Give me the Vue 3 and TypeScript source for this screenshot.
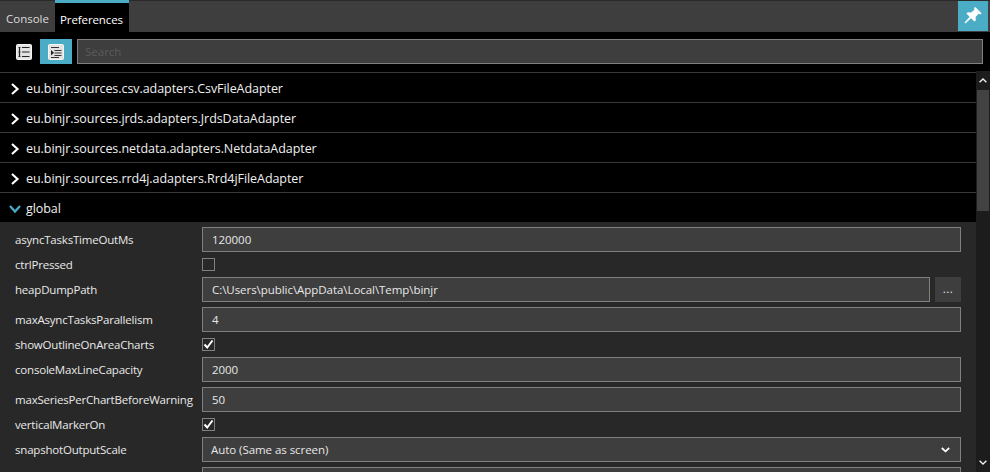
<script setup lang="ts">
interface Row { label: string; kind: 'text' | 'check' | 'path' | 'combo'; value?: string; checked?: boolean }
const adapters: string[] = [
  'eu.binjr.sources.csv.adapters.CsvFileAdapter',
  'eu.binjr.sources.jrds.adapters.JrdsDataAdapter',
  'eu.binjr.sources.netdata.adapters.NetdataAdapter',
  'eu.binjr.sources.rrd4j.adapters.Rrd4jFileAdapter',
]
const rows: Row[] = [
  { label: 'asyncTasksTimeOutMs', kind: 'text', value: '120000' },
  { label: 'ctrlPressed', kind: 'check', checked: false },
  { label: 'heapDumpPath', kind: 'path', value: 'C:\\Users\\public\\AppData\\Local\\Temp\\binjr' },
  { label: 'maxAsyncTasksParallelism', kind: 'text', value: '4' },
  { label: 'showOutlineOnAreaCharts', kind: 'check', checked: true },
  { label: 'consoleMaxLineCapacity', kind: 'text', value: '2000' },
  { label: 'maxSeriesPerChartBeforeWarning', kind: 'text', value: '50' },
  { label: 'verticalMarkerOn', kind: 'check', checked: true },
  { label: 'snapshotOutputScale', kind: 'combo', value: 'Auto (Same as screen)' },
  { label: '', kind: 'text', value: '' },
]
</script>

<template>
  <div class="app">
    <header class="tabbar">
      <div class="tab">Console</div>
      <div class="tab active">Preferences</div>
      <div class="tabfill"></div>
      <button class="pin" aria-label="Pin">
        <svg width="20" height="20" viewBox="0 0 20 20">
          <path d="M12.2 1 L18.6 7.2 L17.2 8.4 L15.6 7.8 L12.6 11 L12.8 14.4 L11.4 15.6 L8 12.2 L2.4 17.4 L1.6 16.6 L6.6 10.8 L3.4 7.6 L4.8 6.2 L8.2 6.4 L11.6 3.4 L11 2 Z" fill="#fff" />
        </svg>
      </button>
    </header>
    <div class="toolbar">
      <button class="tool">
        <svg width="16" height="16" viewBox="0 0 16 16">
          <rect x="0.5" y="0.5" width="15" height="15" rx="1" fill="#e2e2e2" stroke="#f4f4f4" />
          <path d="M3.5 3v10M2.5 3.5h2M2.5 8h2M2.5 12.5h2M6 3.5h7.5M6 8h7.5M6 12.5h7.5" stroke="#222" stroke-width="1.2" />
        </svg>
      </button>
      <button class="tool on">
        <svg width="16" height="16" viewBox="0 0 16 16">
          <rect x="0.5" y="0.5" width="15" height="15" rx="1" fill="#e2e2e2" stroke="#f4f4f4" />
          <path d="M3 3.5h8M6.5 6.5h7M6.5 9h7M6.5 11.5h7M3 13.5h8" stroke="#333" stroke-width="1" />
          <path d="M3 6 L6 8.8 L3 11.5 Z" fill="#222" />
        </svg>
      </button>
      <input class="search" placeholder="Search" />
    </div>
    <div class="body">
      <main class="content">
        <div v-for="a in adapters" :key="a" class="pane">
          <svg class="chev" width="10" height="12" viewBox="0 0 10 12">
            <path d="M2 1 L7.5 6 L2 11" fill="none" stroke="#fff" stroke-width="2.2" />
          </svg>
          <span>{{ a }}</span>
        </div>
        <div class="pane">
          <svg class="chev" width="12" height="10" viewBox="0 0 12 10">
            <path d="M1 2 L6 7.5 L11 2" fill="none" stroke="#4bacc6" stroke-width="2.2" />
          </svg>
          <span>global</span>
        </div>
        <div class="form">
          <div v-for="(r, i) in rows" :key="i" class="row">
            <label class="label">{{ r.label }}</label>
            <div v-if="r.kind === 'text'" class="field">{{ r.value }}</div>
            <div v-else-if="r.kind === 'check'" class="check">
              <svg v-if="r.checked" width="11" height="11" viewBox="0 0 11 11">
                <path d="M1.5 5.5 L4.2 8.5 L9.5 1.5" fill="none" stroke="#fff" stroke-width="2" />
              </svg>
            </div>
            <template v-else-if="r.kind === 'path'">
              <div class="field">{{ r.value }}</div>
              <div class="browse">...</div>
            </template>
            <div v-else class="field combo">
              <span>{{ r.value }}</span>
              <svg width="9" height="6" viewBox="0 0 9 6">
                <path d="M0.8 1 L4.5 4.4 L8.2 1" fill="none" stroke="#fff" stroke-width="1.7" />
              </svg>
            </div>
          </div>
        </div>
      </main>
      <aside class="scrollbar">
        <div class="sb-btn">
          <svg width="8" height="5" viewBox="0 0 8 5">
            <path d="M0.6 4.2 L4 1 L7.4 4.2" fill="none" stroke="#eee" stroke-width="1.4" />
          </svg>
        </div>
        <div class="track"><div class="thumb"></div></div>
        <div class="sb-btn">
          <svg width="8" height="5" viewBox="0 0 8 5">
            <path d="M0.6 0.8 L4 4 L7.4 0.8" fill="none" stroke="#eee" stroke-width="1.4" />
          </svg>
        </div>
      </aside>
    </div>
  </div>
</template>

<style>
html, body { margin: 0; background: #000; }
</style>

<style scoped>
.app {
  width: 990px;
  height: 472px;
  overflow: hidden;
  display: flex;
  flex-direction: column;
  background: #000;
  color: #e8e8e8;
  font-family: "Open Sans", "Noto Sans", sans-serif;
  font-size: 11.5px;
  letter-spacing: -0.2px;
}
.tabbar {
  height: 32px;
  flex: none;
  display: flex;
  background: #3e3e3e;
  border-top: 1px solid #2a2a2a;
  box-sizing: border-box;
}
.tab {
  padding: 0 6px;
  width: 55px;
  box-sizing: border-box;
  line-height: 36px;
  background: #3e3e3e;
  margin-top: -1px;
  border-top: 1px solid #2a2a2a;
  color: #dcdcdc;
  letter-spacing: 0;
}
.tab.active {
  width: 74px;
  padding: 0 5px;
  background: #000;
  border-top: 3px solid #4bacc6;
  color: #fff;
  line-height: 33px;
  letter-spacing: -0.1px;
}
.tabfill { flex: 1; }
.pin {
  width: 30px;
  height: 30px;
  margin-right: 2px;
  border: 0;
  padding: 0;
  background: #4bacc6;
  display: flex;
  align-items: center;
  justify-content: center;
}
.toolbar {
  height: 40px;
  flex: none;
  display: flex;
  align-items: center;
  padding: 0 7px 0 8px;
  box-sizing: border-box;
}
.tool {
  width: 32px;
  height: 25px;
  border: 0;
  padding: 0;
  background: transparent;
  display: flex;
  align-items: center;
  justify-content: center;
  margin-bottom: 1px;
}
.tool.on { background: #4bacc6; margin-right: 5px; }
.search {
  flex: 1;
  height: 25px;
  box-sizing: border-box;
  background: #3e3e3e;
  border: 1px solid #808080;
  outline: none;
  color: #e4e4e4;
  font: inherit;
  padding: 0 7px;
  margin-bottom: 1px;
}
.search::placeholder { color: #5c5c5c; }
.body { flex: 1; display: flex; min-height: 0; }
.content {
  flex: 1;
  min-width: 0;
  overflow: hidden;
  display: flex;
  flex-direction: column;
}
.pane {
  height: 30px;
  flex: none;
  box-sizing: border-box;
  border-top: 1px solid #3a3a3a;
  display: flex;
  align-items: center;
  font-size: 12.5px;
  letter-spacing: -0.06px;
  color: #f0f0f0;
  padding: 2px 0 0 9px;
}
.chev { width: 12px; margin-right: 5px; flex: none; }
.form {
  flex: 1;
  background: #282828;
  display: flex;
  flex-direction: column;
  gap: 5px;
  padding: 5px 15px 0 15px;
}
.row {
  display: flex;
  align-items: center;
  flex: none;
}
.label { width: 187px; flex: none; white-space: nowrap; }
.field {
  flex: 1;
  height: 25px;
  box-sizing: border-box;
  background: #3e3e3e;
  border: 1px solid #808080;
  padding: 0 9px;
  line-height: 23px;
  letter-spacing: -0.05px;
}
.check {
  width: 13px;
  height: 13px;
  box-sizing: border-box;
  margin: 1px 0;
  border: 1px solid #808080;
  display: flex;
  align-items: center;
  justify-content: center;
}
.browse {
  width: 26px;
  height: 25px;
  margin-left: 5px;
  flex: none;
  background: #3e3e3e;
  text-align: center;
  line-height: 23px;
  letter-spacing: 0.4px;
}
.combo {
  display: flex;
  align-items: center;
  justify-content: space-between;
  padding: 0 10px 0 8px;
}
.scrollbar {
  width: 14px;
  flex: none;
  margin-top: -1px;
  background: #262626;
  display: flex;
  flex-direction: column;
  align-items: center;
}
.sb-btn {
  width: 14px;
  height: 19px;
  flex: none;
  background: #1c1c1c;
  display: flex;
  align-items: center;
  justify-content: center;
}
.track { flex: 1; width: 100%; background: #1c1c1c; }
.thumb { width: 12px; height: 121px; margin: 0 auto; background: #424242; }
</style>
